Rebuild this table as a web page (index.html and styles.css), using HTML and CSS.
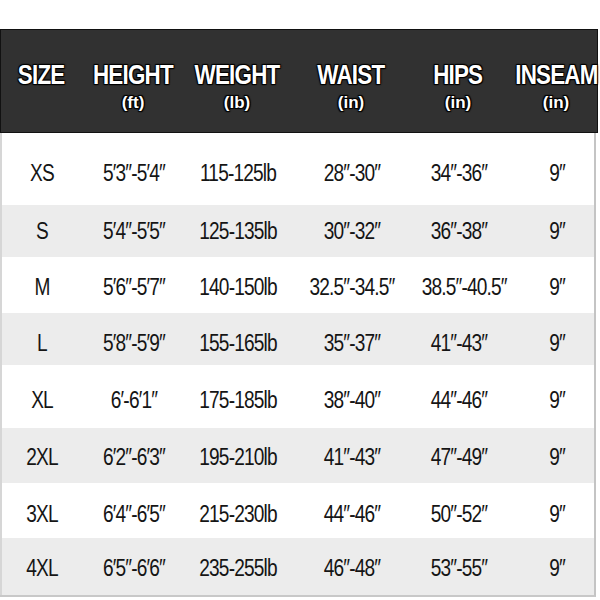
FILE: index.html
```html
<!DOCTYPE html>
<html>
<head>
<meta charset="utf-8">
<link rel="stylesheet" href="styles.css">
</head>
<body>
<div class="chart">
  <div class="row head">
    <div class="cell"><span class="title">SIZE</span><span class="unit">&nbsp;</span></div>
    <div class="cell"><span class="title">HEIGHT</span><span class="unit">(ft)</span></div>
    <div class="cell"><span class="title">WEIGHT</span><span class="unit">(lb)</span></div>
    <div class="cell"><span class="title">WAIST</span><span class="unit">(in)</span></div>
    <div class="cell"><span class="title">HIPS</span><span class="unit">(in)</span></div>
    <div class="cell"><span class="title">INSEAM</span><span class="unit">(in)</span></div>
  </div>
  <div class="row r1"><div class="cell">XS</div><div class="cell">5′3″-5′4″</div><div class="cell">115-125lb</div><div class="cell">28″-30″</div><div class="cell">34″-36″</div><div class="cell">9″</div></div>
  <div class="row r2 alt"><div class="cell">S</div><div class="cell">5′4″-5′5″</div><div class="cell">125-135lb</div><div class="cell">30″-32″</div><div class="cell">36″-38″</div><div class="cell">9″</div></div>
  <div class="row r3"><div class="cell">M</div><div class="cell">5′6″-5′7″</div><div class="cell">140-150lb</div><div class="cell">32.5″-34.5″</div><div class="cell">38.5″-40.5″</div><div class="cell">9″</div></div>
  <div class="row r4 alt"><div class="cell">L</div><div class="cell">5′8″-5′9″</div><div class="cell">155-165lb</div><div class="cell">35″-37″</div><div class="cell">41″-43″</div><div class="cell">9″</div></div>
  <div class="row r5"><div class="cell">XL</div><div class="cell">6′-6′1″</div><div class="cell">175-185lb</div><div class="cell">38″-40″</div><div class="cell">44″-46″</div><div class="cell">9″</div></div>
  <div class="row r6 alt"><div class="cell">2XL</div><div class="cell">6′2″-6′3″</div><div class="cell">195-210lb</div><div class="cell">41″-43″</div><div class="cell">47″-49″</div><div class="cell">9″</div></div>
  <div class="row r7"><div class="cell">3XL</div><div class="cell">6′4″-6′5″</div><div class="cell">215-230lb</div><div class="cell">44″-46″</div><div class="cell">50″-52″</div><div class="cell">9″</div></div>
  <div class="row r8 alt"><div class="cell">4XL</div><div class="cell">6′5″-6′6″</div><div class="cell">235-255lb</div><div class="cell">46″-48″</div><div class="cell">53″-55″</div><div class="cell">9″</div></div>
</div>
</body>
</html>
```
FILE: styles.css
```css
html, body {
  margin: 0;
  padding: 0;
  background: #fff;
}
body {
  width: 600px;
  height: 600px;
  overflow: hidden;
  font-family: "Liberation Sans", Arial, sans-serif;
}
.chart {
  margin-top: 29px;
  width: 596px;
  border-right: 2px solid #c4c4c4;
  border-bottom: 2px solid #c8c8c8;
  box-sizing: border-box;
}
.row {
  display: grid;
  grid-template-columns: 80px 104px 104px 124px 90px 106px;
  align-items: center;
  box-sizing: border-box;
  padding-top: 5px;
  border-left: 2px solid #d6d6d6;
  color: #151515;
  font-size: 23px;
  letter-spacing: -1px;
}
.row .cell {
  text-align: center;
  white-space: nowrap;
  transform: scaleX(0.83);
}
.alt {
  background: #ececec;
}
.head {
  height: 104px;
  width: 598px;
  padding-top: 0;
  background: #313131;
  border: 1px solid #111;
  color: #fff;
  font-weight: bold;
  align-items: start;
}
.head .cell {
  display: flex;
  flex-direction: column;
  align-items: center;
  transform: none;
  text-shadow: 0 0 2px #000, 1px 1px 1px #000, -1px -1px 1px #000, 1px -1px 1px #000, -1px 1px 1px #000;
}
.title {
  font-size: 28px;
  letter-spacing: -1px;
  line-height: 30px;
  margin-top: 30px;
  transform: scaleX(0.8);
}
.unit {
  font-size: 17px;
  letter-spacing: 0;
  line-height: 20px;
  margin-top: 3px;
}
.r1 { height: 72px; padding-top: 9px; }
.r2 { height: 52px; padding-top: 0; }
.r3 { height: 56px; }
.r4 { height: 52px; padding-top: 8px; }
.r5 { height: 63px; padding-top: 7px; }
.r6 { height: 55px; padding-top: 3px; }
.r7 { height: 55px; padding-top: 7px; }
.r8 { height: 57px; padding-top: 3px; }
```
